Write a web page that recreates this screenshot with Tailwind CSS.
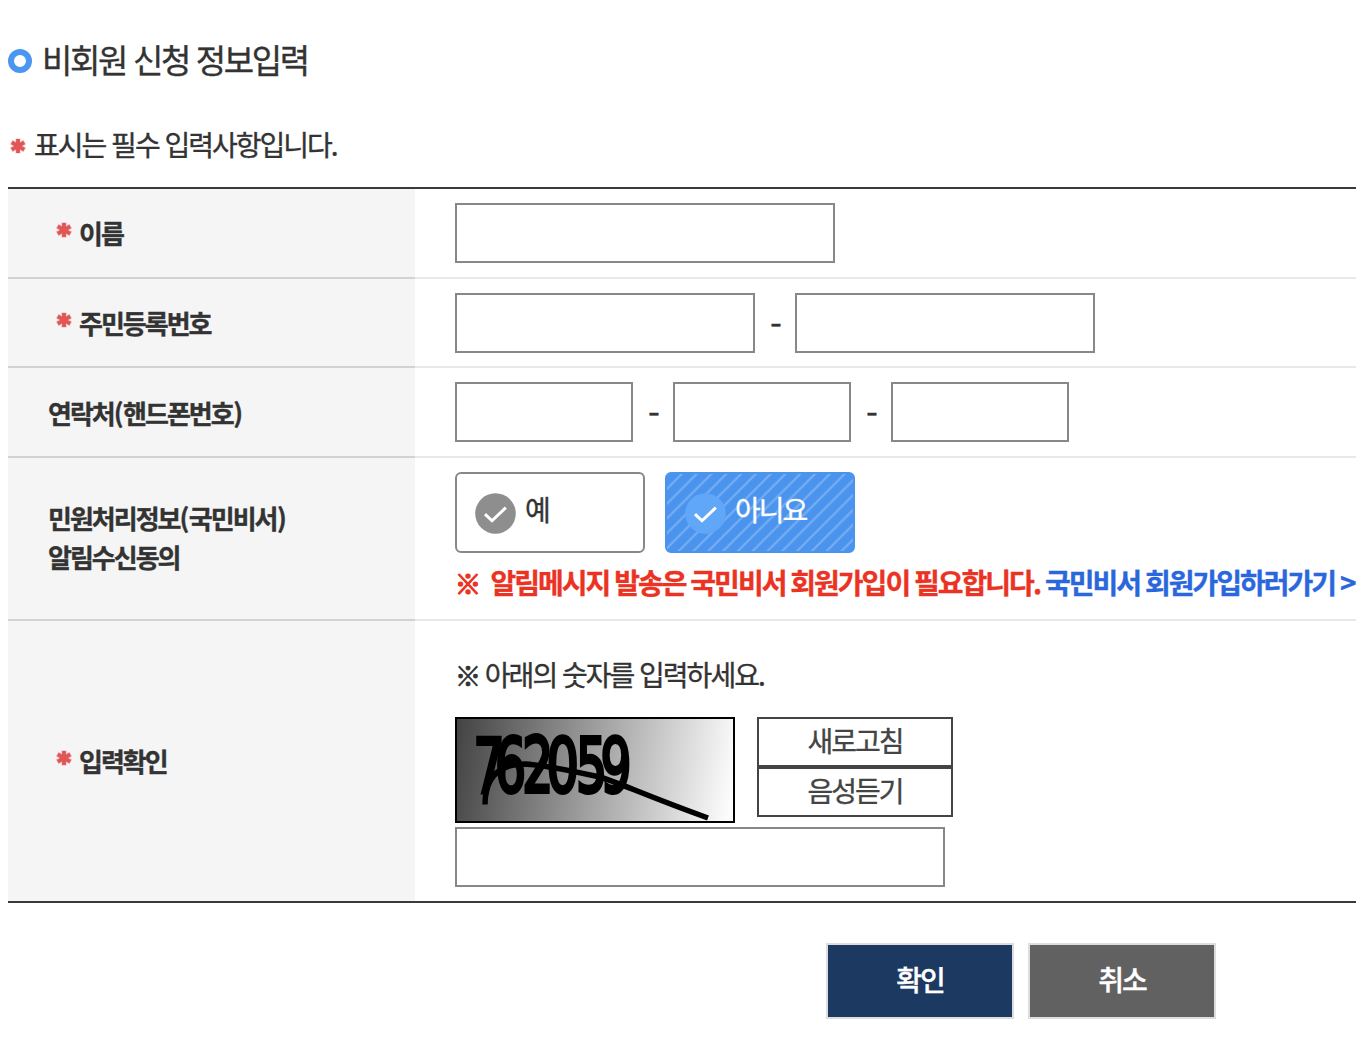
<!DOCTYPE html>
<html lang="ko">
<head>
    <meta charset="UTF-8">
    <meta name="viewport" content="width=device-width, initial-scale=1.0">
    <title>비회원 신청 정보입력</title>
    <script src="https://cdn.jsdelivr.net/npm/@tailwindcss/browser@4"></script>
</head>
<body class="bg-white text-[#333] font-['Noto_Sans_CJK_KR',sans-serif] text-[28px] tracking-[-2px] [-webkit-text-stroke:0.35px] overflow-hidden">
    <!-- required mark -->
    <svg class="hidden">
        <symbol id="required" viewBox="0 0 16 16">
            <path d="M8 .5v15M1.2 4.1l13.6 7.8M14.8 4.1L1.2 11.9" stroke="#e05656" stroke-opacity=".35" stroke-width="5.2" fill="none"/>
            <path d="M8 1v14M1.8 4.4l12.4 7.2M14.2 4.4L1.8 11.6" stroke="#e05656" stroke-width="3.8" fill="none"/>
        </symbol>
    </svg>
    <main class="w-[1400px] h-[1052px] pl-2 pt-9">
        <h1 class="flex items-center h-[50px] text-[33px] tracking-[-2.35px] whitespace-nowrap">
            <svg class="w-6 h-6 mr-[10px]" viewBox="0 0 24 24"><circle cx="12" cy="12" r="9" fill="none" stroke="#4a96f0" stroke-width="6"/></svg>
            <span class="-mt-[2px]">비회원 신청 정보입력</span>
        </h1>
        <p class="flex items-center h-10 mt-[39px] whitespace-nowrap">
            <svg class="w-4 h-4 ml-[2px] mr-2 mt-[2px]"><use href="#required"/></svg>
            <span class="-mt-[2px]">표시는 필수 입력사항입니다.</span>
        </p>

        <form class="mt-[22px] border-y-2 border-[#3a3a3c]">
            <div class="flex h-[90px]">
                <label class="flex items-center w-[407px] pl-12 bg-[#f5f5f5] border-b-2 border-[#d2d2d2] text-[26px] font-bold">
                    <svg class="w-4 h-4 mr-[7px] -mt-[6px]"><use href="#required"/></svg><span class="-mt-[2px]">이름</span>
                </label>
                <div class="flex-1 pl-10 pt-[14px] border-b-2 border-[#e8e8e8]">
                    <input type="text" class="block w-[380px] h-[60px] border-2 border-[#888]">
                </div>
            </div>
            <div class="flex h-[89px]">
                <label class="flex items-center w-[407px] pl-12 pt-[2px] bg-[#f5f5f5] border-b-2 border-[#d2d2d2] text-[26px] font-bold">
                    <svg class="w-4 h-4 mr-[7px] -mt-2"><use href="#required"/></svg><span class="-mt-[2px]">주민등록번호</span>
                </label>
                <div class="flex-1 flex pl-10 pt-[14px] border-b-2 border-[#e8e8e8]">
                    <input type="text" class="w-[300px] h-[60px] border-2 border-[#888]">
                    <span class="w-10 h-[60px] leading-[62px] text-center text-[34px]">-</span>
                    <input type="text" class="w-[300px] h-[60px] border-2 border-[#888]">
                </div>
            </div>
            <div class="flex h-[90px]">
                <label class="flex items-center w-[407px] pl-10 bg-[#f5f5f5] border-b-2 border-[#d2d2d2] text-[26px] font-bold">연락처<span class="tracking-[-0.5px]">(</span>핸드폰번호<span class="pl-[0.5px]">)</span></label>
                <div class="flex-1 flex pl-10 pt-[14px] border-b-2 border-[#e8e8e8]">
                    <input type="text" class="w-[178px] h-[60px] border-2 border-[#888]">
                    <span class="w-10 h-[60px] leading-[62px] text-center text-[34px]">-</span>
                    <input type="text" class="w-[178px] h-[60px] border-2 border-[#888]">
                    <span class="w-10 h-[60px] leading-[62px] text-center text-[34px]">-</span>
                    <input type="text" class="w-[178px] h-[60px] border-2 border-[#888]">
                </div>
            </div>
            <div class="flex h-[163px]">
                <label class="flex items-center w-[407px] pl-10 pb-[3px] bg-[#f5f5f5] border-b-2 border-[#d2d2d2] text-[26px] leading-[39px] font-bold"><span>민원처리정보<span class="tracking-[-0.5px]">(</span>국민비서<span class="pl-[0.5px]">)</span><br>알림수신동의</span></label>
                <div class="flex-1 pl-10 pt-[14px] border-b-2 border-[#e8e8e8]">
                    <div class="flex gap-5">
                        <button type="button" class="flex items-center w-[190px] h-[81px] pl-[18px] border-2 border-[#888] rounded-md">
                            <svg class="w-[41px] h-[41px] mr-[9px] mt-[2px]" viewBox="0 0 41 41"><circle cx="20.5" cy="20.5" r="20.3" fill="#8e8e8e"/><path d="M10 21.2l7 6.6L30.8 14.6" fill="none" stroke="#fff" stroke-width="3"/></svg>
                            <span class="-mt-2">예</span>
                        </button>
                        <button type="button" class="relative flex items-center w-[190px] h-[81px] pl-[18px] border-2 border-[#4a94ee] rounded-md bg-[#4a94ee] text-white">
                            <svg class="absolute inset-0 w-[186px] h-[77px]">
                                <defs>
                                    <pattern id="stripes" width="14.8" height="14.8" patternUnits="userSpaceOnUse">
                                        <path d="M-3.7 3.7L3.7 -3.7M0 14.8L14.8 0M11.1 18.5L18.5 11.1" stroke="#76aef3" stroke-width="2.2"/>
                                    </pattern>
                                </defs>
                                <rect width="186" height="77" fill="url(#stripes)"/>
                            </svg>
                            <svg class="relative w-[41px] h-[41px] mr-[9px] mt-[2px]" viewBox="0 0 41 41"><circle cx="20.5" cy="20.5" r="20.3" fill="#60a7f7"/><path d="M10 21.2l7 6.6L30.8 14.6" fill="none" stroke="#fff" stroke-width="3"/></svg>
                            <span class="relative -mt-2">아니요</span>
                        </button>
                    </div>
                    <p class="mt-[9px] h-10 leading-10 font-bold whitespace-nowrap [word-spacing:-0.9px] text-[#eb3323]"><span class="text-[26px] tracking-[-0.5px] [-webkit-text-stroke:1.4px]">※</span>&nbsp; 알림메시지 발송은 국민비서 회원가입이 필요합니다. <a class="text-[#2b67dc]">국민비서 회원가입하러가기 &gt;</a></p>
                </div>
            </div>
            <div class="flex h-[280px]">
                <label class="flex items-center w-[407px] pl-12 bg-[#f5f5f5] text-[26px] font-bold">
                    <svg class="w-4 h-4 mr-[7px] -mt-[6px]"><use href="#required"/></svg><span class="-mt-[2px]">입력확인</span>
                </label>
                <div class="flex-1 pl-10 pt-[33px]">
                    <p class="h-10 leading-10"><span class="text-[26px] tracking-[-2px] [-webkit-text-stroke:0.8px]">※</span> 아래의 숫자를 입력하세요.</p>
                    <div class="flex mt-[23px]">
                        <!-- captcha -->
                        <svg class="w-[280px] h-[106px] border-2 border-black" viewBox="0 0 276 102">
                            <defs>
                                <linearGradient id="shade" gradientUnits="userSpaceOnUse" x1="0" y1="20" x2="276" y2="62">
                                    <stop offset="0" stop-color="#454545"/>
                                    <stop offset="1" stop-color="#fcfcfc"/>
                                </linearGradient>
                            </defs>
                            <rect width="276" height="102" fill="url(#shade)"/>
                            <g class="font-['DejaVu_Sans'] text-[75px] tracking-normal [-webkit-text-stroke:0px]" stroke="#000" stroke-width="4">
                                <text transform="translate(16.4 73) scale(.65 1)">7</text>
                                <text transform="translate(38 73) scale(.65 1)">6</text>
                                <text transform="translate(65.3 73) scale(.65 1.03)">2</text>
                                <text transform="translate(89.6 73) scale(.68 1)">0</text>
                                <text transform="translate(119 73) scale(.65 1)">5</text>
                                <text transform="translate(143.6 73) scale(.65 1)">9</text>
                            </g>
                            <path d="M28 85.5C28 58 42 45 68 45C88 46 115 52 143 58C160 63 190 77 251 99" fill="none" stroke="#000" stroke-width="5.5"/>
                        </svg>
                        <div class="ml-[22px] w-[196px] text-[#444]">
                            <button type="button" class="block w-full h-[51px] pb-[5px] leading-[42px] border-2 border-b-[3px] border-[#444]">새로고침</button>
                            <button type="button" class="block w-full h-[50px] -mt-px pb-1 leading-[42px] border-2 border-[#444]">음성듣기</button>
                        </div>
                    </div>
                    <input type="text" class="block mt-1 w-[490px] h-[60px] border-2 border-[#888]">
                </div>
            </div>
        </form>

        <div class="flex gap-[14px] mt-10 pl-[818px] text-white font-medium">
            <button type="button" class="w-[188px] h-[76px] pb-1 leading-[68px] border-2 border-[#ddd] bg-[#1c3961]">확인</button>
            <button type="button" class="w-[188px] h-[76px] pb-1 leading-[68px] border-2 border-[#ddd] bg-[#616161]">취소</button>
        </div>
    </main>
</body>
</html>
